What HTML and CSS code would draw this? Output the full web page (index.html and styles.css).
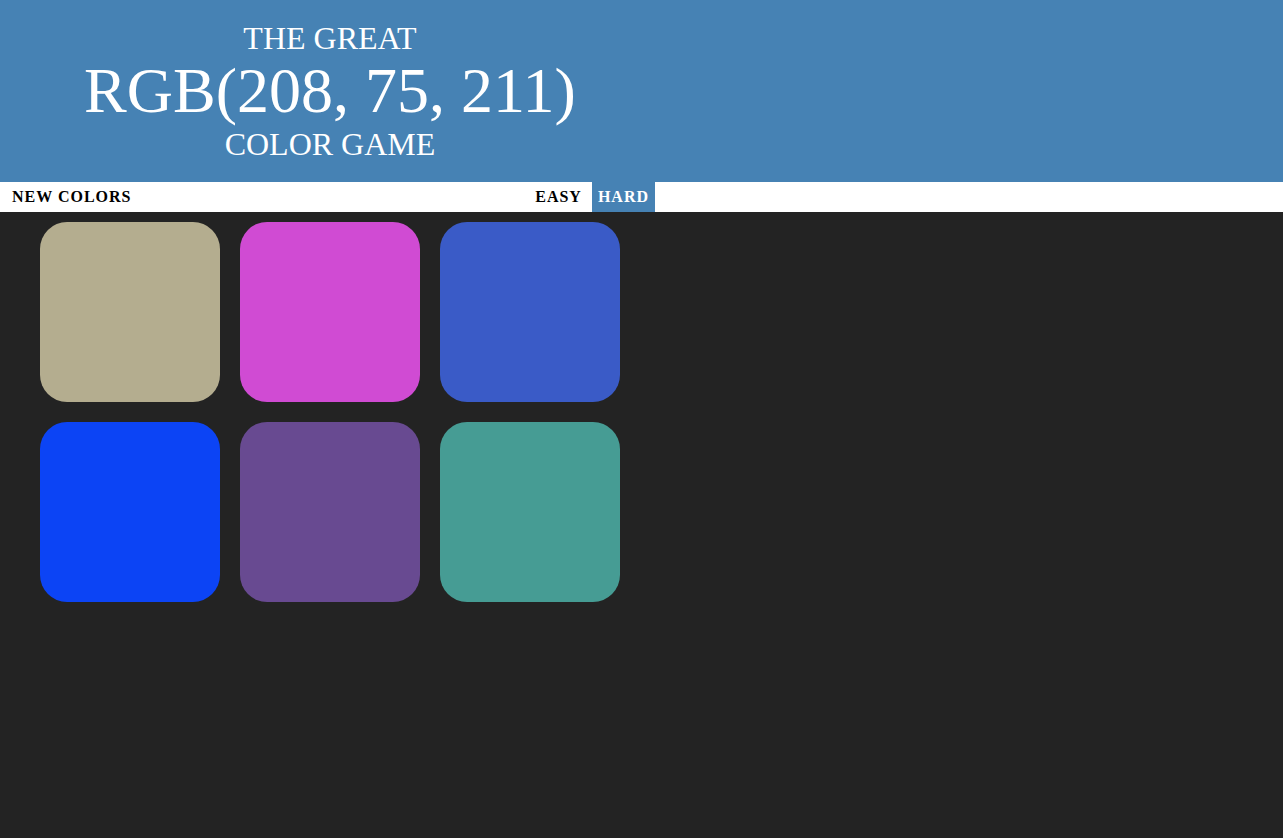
FILE: index.html
```html
<!DOCTYPE html>
<html>
<head>
<meta charset="utf-8">
<title>Color Game</title>
<link rel="stylesheet" href="styles.css">
</head>
<body>
<header class="header">
  <h1 class="title">The Great<br><span class="color-display">RGB(208, 75, 211)</span><br>Color Game</h1>
</header>
<div class="stripe">
  <div class="stripe-inner">
    <button class="btn">New Colors</button>
    <span class="message"></span>
    <button class="btn mode">Easy</button>
    <button class="btn mode selected">Hard</button>
  </div>
</div>
<div class="board">
  <div class="square sq-tan"></div>
  <div class="square sq-pink"></div>
  <div class="square sq-blue"></div>
  <div class="square sq-bright"></div>
  <div class="square sq-purple"></div>
  <div class="square sq-teal"></div>
</div>
</body>
</html>
```
FILE: styles.css
```css
html, body {
  margin: 0;
  padding: 0;
}
body {
  background: #232323;
  font-family: "Liberation Serif", "Times New Roman", serif;
}
.header {
  background: steelblue;
  padding: 21px 0 20px;
}
.title {
  width: 660px;
  margin: 0;
  text-align: center;
  color: #fff;
  font-size: 32px;
  font-weight: normal;
  line-height: 1.1;
  text-transform: uppercase;
}
.color-display {
  font-size: 64px;
}
.stripe {
  background: #fff;
  height: 30px;
}
.stripe-inner {
  width: 660px;
  height: 30px;
  display: flex;
  padding-left: 6px;
  box-sizing: border-box;
}
.btn {
  border: none;
  background: none;
  margin: 0;
  padding: 0 6px;
  height: 30px;
  font-family: "Liberation Serif", "Times New Roman", serif;
  font-size: 16px;
  font-weight: 700;
  letter-spacing: 1px;
  text-transform: uppercase;
  color: #000;
}
.message {
  flex: 1;
}
.mode.selected {
  margin-left: 4px;
  margin-right: 5px;
  background: steelblue;
  color: #fff;
}
.board {
  width: 600px;
  margin-left: 30px;
  padding: 10px 0;
  display: grid;
  grid-template-columns: repeat(3, 180px);
  column-gap: 20px;
  row-gap: 20px;
  justify-content: center;
}
.square {
  width: 180px;
  height: 180px;
  border-radius: 27px;
}
.sq-tan { background: #b4ad8f; }
.sq-pink { background: #d04bd3; }
.sq-blue { background: #3a5bc7; }
.sq-bright { background: #0c44f5; }
.sq-purple { background: #684a91; }
.sq-teal { background: #469c94; }
```
